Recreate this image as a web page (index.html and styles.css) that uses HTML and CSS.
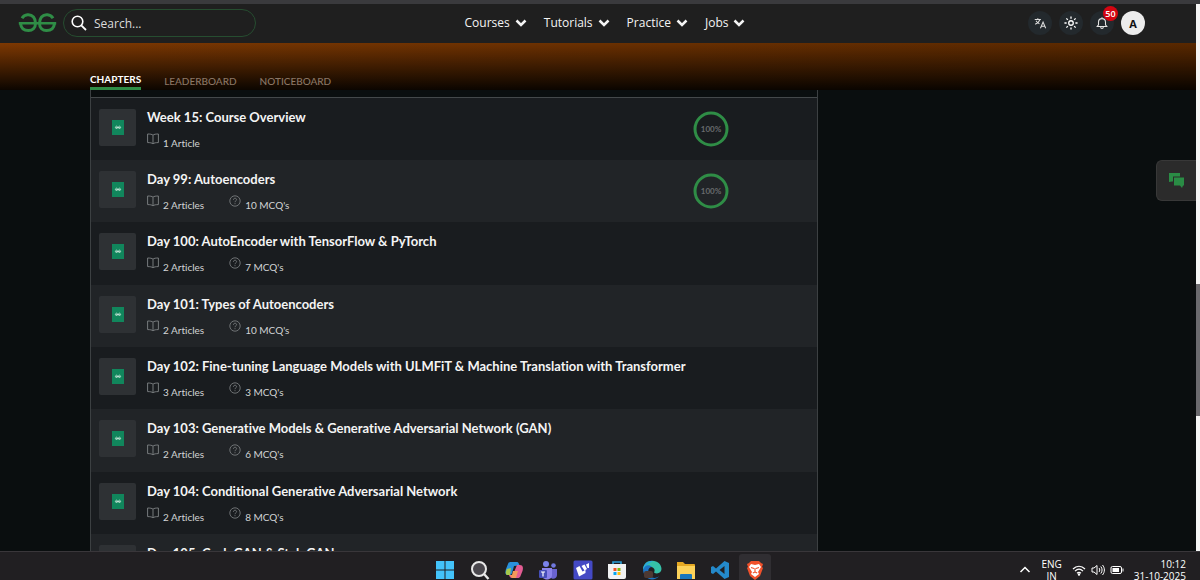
FILE: index.html
```html
<!DOCTYPE html>
<html lang="en">
<head>
    <meta charset="UTF-8">
    <meta name="viewport" content="width=device-width, initial-scale=1.0">
    <title>Chapters</title>
    <link rel="stylesheet" href="styles.css">
</head>
<body>
    <!-- Shared icons -->
    <svg class="defs" aria-hidden="true">
        <symbol id="gfg" viewBox="0 0 38 20">
            <g fill="none" stroke="currentColor" stroke-width="3">
                <path d="M3.500 5.200C6 .9 12 .5 15 4C16.500 5.800 17 8 17 10.300C17 14.800 14 17.600 10 17.600C5.500 17.600 2.500 14.800 2 10.300"/>
                <path d="M34.500 5.200C32 .9 26 .5 23 4C21.500 5.800 21 8 21 10.300C21 14.800 24 17.600 28 17.600C32.500 17.600 35.500 14.800 36 10.300"/>
                <path d="M.3 10.300H37.700" stroke-width="2.600"/>
            </g>
        </symbol>
        <symbol id="chevron" viewBox="0 0 12 8">
            <path d="M1.500 1.500L6 6L10.500 1.500" fill="none" stroke="currentColor" stroke-width="2.500"/>
        </symbol>
        <symbol id="book" viewBox="0 0 12 12">
            <path d="M6 2.200C5 1.200 3 1 .6 1V9.600C3 9.600 5 9.800 6 10.900C7 9.800 9 9.600 11.400 9.600V1C9 1 7 1.200 6 2.200V10.900" fill="none" stroke="currentColor"/>
        </symbol>
        <symbol id="quiz" viewBox="0 0 12 12">
            <g fill="none" stroke="currentColor" stroke-width=".9">
                <circle cx="6" cy="6" r="5.200"/>
                <path d="M4.400 4.800C4.400 2.700 7.600 2.700 7.600 4.700C7.600 5.800 6 5.800 6 7.200M6 8.200V9.200"/>
            </g>
        </symbol>
        <symbol id="file" viewBox="0 0 12 15">
            <path d="M0 0H12V15H0Z" fill="#11865c"/>
            <path d="M3.200 7.600H8.800M3.500 6.600C4.500 5.600 5.700 6.300 5.700 7.600C5.500 8.800 3.600 8.800 3.300 7.600M8.500 6.600C7.500 5.600 6.300 6.300 6.300 7.600C6.500 8.800 8.400 8.800 8.700 7.600" fill="none" stroke="#d8efe5" stroke-width=".7"/>
        </symbol>
        <symbol id="ring" viewBox="0 0 36 36">
            <circle cx="18" cy="18" r="16" fill="none" stroke="#2f8d46" stroke-width="3"/>
        </symbol>
    </svg>

    <div class="window">
        <div class="page">
            <header class="header">
                <div class="header-left">
                    <a class="logo" href="#" aria-label="Home"><svg><use href="#gfg"/></svg></a>
                    <label class="search">
                        <svg viewBox="0 0 16 16"><circle cx="6.500" cy="6.500" r="5.300" fill="none" stroke="#fff" stroke-width="1.600"/><path d="M10.300 10.300L15 15" stroke="#fff" stroke-width="1.800"/></svg>
                        <input type="search" placeholder="Search..." aria-label="Search">
                    </label>
                </div>
                <nav class="menu">
                    <button>Courses <svg><use href="#chevron"/></svg></button>
                    <button>Tutorials <svg><use href="#chevron"/></svg></button>
                    <button>Practice <svg><use href="#chevron"/></svg></button>
                    <button>Jobs <svg><use href="#chevron"/></svg></button>
                </nav>
                <div class="header-right">
                    <button class="round" aria-label="Language">
                        <svg viewBox="0 0 16 16" fill="none" stroke="#ddd" stroke-width="1.200"><path d="M2 4H9M5.500 2.500V4M8 4C7 7 5 8.500 2.500 9.500M3.500 5.500C4.500 7.500 6 8.500 7.500 9M8.500 14L11.500 7L14.500 14M9.500 11.800H13.500"/></svg>
                    </button>
                    <button class="round" aria-label="Theme">
                        <svg viewBox="0 0 16 16" fill="none" stroke="#fff" stroke-width="1.500"><circle cx="8" cy="8" r="2.600"/><path d="M8 .5V3M8 13V15.500M.5 8H3M13 8H15.500M2.700 2.700L4.400 4.400M11.600 11.600L13.300 13.300M2.700 13.300L4.400 11.600M11.600 4.400L13.300 2.700"/></svg>
                    </button>
                    <button class="round" aria-label="Notifications">
                        <svg viewBox="0 0 16 16" fill="none" stroke="#e4e4e4" stroke-width="1.200"><path d="M2.500 12H13.500L12 10V7C12 4.500 10.500 3 8 3C5.500 3 4 4.500 4 7V10ZM8 3V1.500M6.500 12.500C6.500 14.800 9.500 14.800 9.500 12.500"/></svg>
                        <span class="badge">50</span>
                    </button>
                    <button class="round avatar">A</button>
                </div>
            </header>

            <nav class="tabs">
                <a class="tab active" href="#">CHAPTERS</a>
                <a class="tab" href="#">LEADERBOARD</a>
                <a class="tab" href="#">NOTICEBOARD</a>
            </nav>

            <main class="content">
                <ul class="chapters">
                    <li class="chapter">
                        <span class="thumb"><svg><use href="#file"/></svg></span>
                        <div class="info">
                            <h3>Week 15: Course Overview</h3>
                            <div class="meta">
                                <span><svg><use href="#book"/></svg>1 Article</span>
                            </div>
                        </div>
                        <div class="progress"><svg><use href="#ring"/></svg><span>100%</span></div>
                    </li>
                    <li class="chapter">
                        <span class="thumb"><svg><use href="#file"/></svg></span>
                        <div class="info">
                            <h3>Day 99: Autoencoders</h3>
                            <div class="meta">
                                <span><svg><use href="#book"/></svg>2 Articles</span>
                                <span><svg><use href="#quiz"/></svg>10 MCQ's</span>
                            </div>
                        </div>
                        <div class="progress"><svg><use href="#ring"/></svg><span>100%</span></div>
                    </li>
                    <li class="chapter">
                        <span class="thumb"><svg><use href="#file"/></svg></span>
                        <div class="info">
                            <h3>Day 100: AutoEncoder with TensorFlow &amp; PyTorch</h3>
                            <div class="meta">
                                <span><svg><use href="#book"/></svg>2 Articles</span>
                                <span><svg><use href="#quiz"/></svg>7 MCQ's</span>
                            </div>
                        </div>
                    </li>
                    <li class="chapter">
                        <span class="thumb"><svg><use href="#file"/></svg></span>
                        <div class="info">
                            <h3>Day 101: Types of Autoencoders</h3>
                            <div class="meta">
                                <span><svg><use href="#book"/></svg>2 Articles</span>
                                <span><svg><use href="#quiz"/></svg>10 MCQ's</span>
                            </div>
                        </div>
                    </li>
                    <li class="chapter">
                        <span class="thumb"><svg><use href="#file"/></svg></span>
                        <div class="info">
                            <h3>Day 102: Fine-tuning Language Models with ULMFiT &amp; Machine Translation with Transformer</h3>
                            <div class="meta">
                                <span><svg><use href="#book"/></svg>3 Articles</span>
                                <span><svg><use href="#quiz"/></svg>3 MCQ's</span>
                            </div>
                        </div>
                    </li>
                    <li class="chapter">
                        <span class="thumb"><svg><use href="#file"/></svg></span>
                        <div class="info">
                            <h3>Day 103: Generative Models &amp; Generative Adversarial Network (GAN)</h3>
                            <div class="meta">
                                <span><svg><use href="#book"/></svg>2 Articles</span>
                                <span><svg><use href="#quiz"/></svg>6 MCQ's</span>
                            </div>
                        </div>
                    </li>
                    <li class="chapter">
                        <span class="thumb"><svg><use href="#file"/></svg></span>
                        <div class="info">
                            <h3>Day 104: Conditional Generative Adversarial Network</h3>
                            <div class="meta">
                                <span><svg><use href="#book"/></svg>2 Articles</span>
                                <span><svg><use href="#quiz"/></svg>8 MCQ's</span>
                            </div>
                        </div>
                    </li>
                    <li class="chapter">
                        <span class="thumb"><svg><use href="#file"/></svg></span>
                        <div class="info">
                            <h3>Day 105: CycleGAN &amp; StyleGAN</h3>
                        </div>
                    </li>
                </ul>
            </main>

            <button class="chat" aria-label="Feedback">
                <svg viewBox="0 0 17 17"><path d="M1 1H12V4.500H5V9.500H4L1 10Z" fill="#2a8c45"/><path d="M6 5.500H16V13.500H15L14 16L12 13.500H6Z" fill="#2a8c45"/></svg>
            </button>
        </div>
        <div class="scrollbar"><div class="scroll-thumb"></div></div>
    </div>

    <footer class="taskbar">
        <div class="apps">
            <button aria-label="Start"><svg viewBox="0 0 20 20"><path d="M1 1H9.500V9.500H1ZM10.500 1H19V9.500H10.500ZM1 10.500H9.500V19H1ZM10.500 10.500H19V19H10.500Z" fill="#43c3fa"/></svg></button>
            <button aria-label="Search"><svg viewBox="0 0 20 20"><circle cx="9" cy="9" r="7" fill="#4a474d" stroke="#e8e8e8" stroke-width="2"/><path d="M14 14L18.500 19" stroke="#e8e8e8" stroke-width="2.400"/></svg></button>
            <button aria-label="Copilot"><svg viewBox="0 0 20 20"><path d="M7 2H13C14.500 2 15 4 15.500 5.500L10 6L8 13C7.500 15 6 15 4 15C1 15 1 12 2 9L4 4C4.500 2.500 5.500 2 7 2Z" fill="#2891dc"/><path d="M3 9L7 8L6 15H4C1 15 1.500 12 3 9Z" fill="#a7c84b"/><path d="M13 5H16C19 5 19.500 8 18.500 11L16.500 16C16 17.500 15 18 13.500 18H8C6 18 5.500 16 5 15H8C10 15 10 13 10.500 11Z" fill="#e35c93"/><path d="M9 11H14L12 18H8L6 15H8Z" fill="#f49a5a"/></svg></button>
            <button aria-label="Teams"><svg viewBox="0 0 20 20"><circle cx="8" cy="4" r="3" fill="#7b83eb"/><circle cx="15.500" cy="5.500" r="2.300" fill="#7078de"/><path d="M11 9H19V15C19 19 14 20 12 17Z" fill="#6a63d0"/><path d="M4 8H14V15C14 21 4 21 4 15Z" fill="#8b83eb"/><rect x="1" y="10" width="8" height="8" rx="1" fill="#464eb8"/><path d="M3 12H7M5 12V16.500" stroke="#fff" stroke-width="1.200"/></svg></button>
            <button aria-label="App"><svg viewBox="0 0 20 20"><rect x=".5" y=".5" width="19" height="19" rx="1.500" fill="#4449c4"/><path d="M3 8L6.500 6L9.500 11.500L12.500 10V13L6 16.500ZM8.500 6L11.500 4.500L14 9L11.500 10.500ZM13 4.500L16 3V8L14.500 8Z" fill="#fff"/></svg></button>
            <button aria-label="Store"><svg viewBox="0 0 20 20"><path d="M6 5V2H14V5" fill="none" stroke="#2a9ed8" stroke-width="1.600"/><path d="M1 4H19V17Q19 19 17 19H3Q1 19 1 17Z" fill="#f1f2f3"/><path d="M6.500 8H9.500V11H6.500Z" fill="#f05325"/><path d="M10.500 8H13.500V11H10.500Z" fill="#80bb08"/><path d="M6.500 12H9.500V15H6.500Z" fill="#05a5f0"/><path d="M10.500 12H13.500V15H10.500Z" fill="#ffba08"/></svg></button>
            <button aria-label="Edge"><svg viewBox="0 0 20 20"><path d="M1 10C1 4 5 .8 10 .8C16 .8 19.500 5 19.500 9C19.500 13 15 14.500 12 12.500C14 9 11 7 8 7C5 7 2 8 1 10Z" fill="#35c1a8"/><path d="M1 10C2 5 7 4 10 7C6 7 5 12 8 16C11 19 15 18 17.500 16C12 22 2 20 1 10Z" fill="#1b74c4"/><path d="M1 9C2 3 7 .8 11 1C7 3 4 5 1 9Z" fill="#2ba5e1"/><rect x="2" y="11" width="9" height="7" rx="2" fill="#4d3933"/></svg></button>
            <button aria-label="Files"><svg viewBox="0 0 20 20"><path d="M1 2H7L9 4H18Q19 4 19 5V19H1Z" fill="#e5a823"/><path d="M1 6H19V19H1Z" fill="#fcd25a"/><path d="M4 19V15Q4 14 5 14H15Q16 14 16 15V19Z" fill="#1976bd"/></svg></button>
            <button aria-label="Code"><svg viewBox="0 0 20 20"><path d="M14.500 1L19 3V17L14.500 19L6 11.500L3 14L1 13V7L3 6L6 8.500ZM14.500 6L9.500 10L14.500 14Z" fill="#2489ca" fill-rule="evenodd"/></svg></button>
            <button class="current" aria-label="Brave"><svg viewBox="0 0 20 20"><path d="M6 1H14L16 3L18 4L17 7L18 8L15 16L10 20L5 16L2 8L3 7L2 4L4 3Z" fill="#f1512b"/><path d="M6 4L10 5L14 4L16 7L13 12L14 14L10 17L6 14L7 12L4 7Z" fill="#fff"/><path d="M6 7.500L9 8.500M14 7.500L11 8.500M10 8V12M7.800 13L10 12L12.200 13" fill="none" stroke="#f1512b" stroke-width="1.100"/></svg></button>
        </div>
        <div class="tray">
            <svg class="caret" viewBox="0 0 12 12"><path d="M1.500 8L6 3.500L10.500 8" fill="none" stroke="#fff" stroke-width="1.500"/></svg>
            <span class="lang">ENG<br>IN</span>
            <div class="status">
                <svg viewBox="0 0 14 14" fill="none" stroke="#fff" stroke-width="1.200"><path d="M1 6C4.500 2.300 9.500 2.300 13 6M3 8.200C5.400 5.800 8.600 5.800 11 8.200M5 10.300C6.200 9.200 7.800 9.200 9 10.300"/><circle cx="7" cy="11.500" r=".6"/></svg>
                <svg viewBox="0 0 14 14" fill="none" stroke="#fff"><path d="M1 5H3L6 2.500V11.500L3 9H1ZM8 5C9 6 9 8 8 9M9.800 3.500C11.500 5.500 11.500 8.500 9.800 10.500M11.500 2C14 5 14 9 11.500 12"/></svg>
                <svg viewBox="0 0 14 14"><rect x="1" y="3.500" width="10.500" height="7" rx="1.500" fill="none" stroke="#fff"/><path d="M2.500 5H9V9H2.500ZM12.500 5.500H13.500V8.500H12.500Z" fill="#fff"/></svg>
            </div>
            <time class="clock">10:12<br>31-10-2025</time>
        </div>
    </footer>
</body>
</html>
```
FILE: styles.css
```css
* {
    margin: 0;
    padding: 0;
    box-sizing: border-box;
}

body {
    display: flex;
    flex-direction: column;
    height: 100vh;
    overflow: hidden;
    background: #0a0e0f;
    color: #fff;
    font-family: Lato, sans-serif;
    font-variant-ligatures: none;
}

button, input {
    border: none;
    background: none;
    color: inherit;
    font: inherit;
}

a {
    color: inherit;
    text-decoration: none;
}

svg {
    display: block;
    flex: none;
}

.defs {
    position: absolute;
    width: 0;
    height: 0;
}

.window {
    display: flex;
    flex: 1;
    min-height: 0;
    border-top: 4px solid #3a3a3d;
}

.page {
    position: relative;
    flex: 1;
    min-width: 0;
    overflow: hidden;
}

/* Header */
.header {
    display: grid;
    grid-template-columns: 1fr auto 1fr;
    align-items: center;
    height: 39px;
    padding: 0 0 1px 14px;
    background: #1f1f1f;
    font-family: "Open Sans", sans-serif;
}

.header-left {
    display: flex;
    align-items: center;
    gap: 6px;
    padding-left: 4px;
}

.logo {
    color: #2f8d46;
}

.logo svg {
    width: 39px;
    height: 20px;
}

.search {
    display: flex;
    align-items: center;
    gap: 7px;
    width: 193px;
    height: 28px;
    padding: 0 7px;
    border: 1px solid #264d30;
    border-radius: 14px;
}

.search svg {
    width: 16px;
    height: 16px;
}

.search input {
    width: 100%;
    min-width: 0;
    outline: none;
    font-size: 12px;
}

.search input::placeholder {
    color: #dcdcdc;
}

.menu {
    display: flex;
    gap: 17px;
}

.menu button {
    display: flex;
    align-items: center;
    gap: 5px;
    font-size: 12px;
    line-height: 16px;
    color: #f4f4f4;
}

.menu svg {
    width: 12px;
    height: 8px;
}

.header-right {
    display: flex;
    justify-content: flex-end;
    gap: 7px;
    padding-right: 51px;
}

.round {
    position: relative;
    display: flex;
    align-items: center;
    justify-content: center;
    width: 24px;
    height: 24px;
    border-radius: 50%;
    background: #23292d;
}

.round svg {
    width: 14px;
    height: 14px;
}

.avatar {
    background: #ececec;
    color: #111;
    font-size: 11px;
    font-weight: bold;
}

.badge {
    position: absolute;
    top: -5px;
    right: -4px;
    width: 15px;
    height: 15px;
    border-radius: 50%;
    background: #d40511;
    font-size: 9px;
    font-weight: 600;
    line-height: 15px;
    text-align: center;
}

/* Tabs */
.tabs {
    display: flex;
    align-items: flex-end;
    gap: 23px;
    height: 47px;
    padding: 0 90px;
    background: linear-gradient(rgba(0, 0, 0, 0), rgba(0, 0, 0, 0.9)), linear-gradient(to right, #7d3802, #592800);
}

.tab {
    padding-bottom: 2px;
    color: #8b7766;
    font-size: 10px;
    font-weight: 500;
    line-height: 14px;
}

.tab.active {
    border-bottom: 3px solid #2f8d46;
    padding-bottom: 1px;
    color: #fff;
    font-weight: bold;
}

/* Chapter list */
.content {
    width: calc(100% - 180px);
    max-width: 728px;
    margin-left: 90px;
    padding-top: 7px;
    border: solid #3c4042;
    border-width: 0 1px;
}

.chapters {
    list-style: none;
    border-top: 1px solid #44484a;
}

.chapter {
    display: flex;
    gap: 11px;
    height: 62px;
    padding: 11px 88px 0 8px;
    background: #191c1f;
}

.chapter:nth-child(even) {
    background: #212427;
}

.chapter:nth-child(3n) {
    height: 63px;
}

.thumb {
    display: flex;
    align-items: center;
    justify-content: center;
    width: 37px;
    height: 37px;
    border-radius: 2px;
    background: #2e3134;
}

.thumb svg {
    width: 12px;
    height: 15px;
}

.info {
    flex: 1;
}

.info h3 {
    font-size: 13px;
    line-height: 16px;
    color: #f4f4f4;
    white-space: nowrap;
}

.meta {
    display: flex;
    gap: 25px;
    margin-top: 8px;
}

.meta span {
    display: flex;
    gap: 4px;
    color: #d2d4d5;
    font-size: 10px;
    line-height: 20px;
}

.meta svg {
    width: 12px;
    height: 12px;
    color: #777b7d;
}

.progress {
    display: grid;
    place-items: center;
    width: 36px;
    height: 40px;
}

.progress svg, .progress span {
    grid-area: 1 / 1;
}

.progress svg {
    width: 36px;
    height: 36px;
}

.progress span {
    color: #686b6d;
    font-size: 8px;
    font-weight: bold;
}

.chat {
    position: absolute;
    top: 156px;
    right: 0;
    display: flex;
    align-items: center;
    width: 40px;
    height: 41px;
    padding-left: 11px;
    border: 1px solid #383838;
    border-right: none;
    border-radius: 6px 0 0 6px;
    background: #2b2b2b;
}

.chat svg {
    width: 17px;
    height: 17px;
}

.scrollbar {
    width: 4px;
    padding-top: 280px;
    background: #f5f5f5;
}

.scroll-thumb {
    height: 132px;
    background: #6b6a6e;
}

/* Taskbar */
.taskbar {
    display: grid;
    grid-template-columns: 1fr auto 1fr;
    height: 29px;
    border-top: 1px solid #39363a;
    background: #211f22;
    overflow: hidden;
}

.apps {
    display: grid;
    grid-column: 2;
    grid-template-columns: repeat(10, 1fr);
    justify-items: center;
    width: 344px;
    padding-top: 2px;
}

.apps button {
    width: 32px;
    height: 32px;
    padding: 6px;
    border-radius: 3px;
}

.apps .current {
    background: #302e32;
}

.tray {
    display: flex;
    justify-content: flex-end;
    gap: 10px;
    height: 36px;
    padding: 6px 14px 0 0;
    font-family: "Open Sans", sans-serif;
    font-size: 10px;
    line-height: 12px;
}

.caret {
    width: 12px;
    height: 12px;
    margin-top: 6px;
}

.lang {
    text-align: center;
}

.status {
    display: flex;
    gap: 5px;
    padding-top: 5px;
}

.status svg {
    width: 14px;
    height: 14px;
}

.clock {
    text-align: right;
}
```
